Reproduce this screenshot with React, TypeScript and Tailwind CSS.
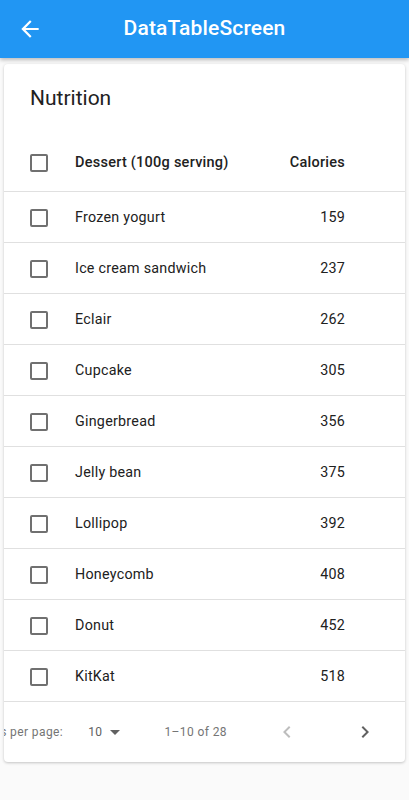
import React from "react";

const desserts = [
  { name: "Frozen yogurt", calories: 159 },
  { name: "Ice cream sandwich", calories: 237 },
  { name: "Eclair", calories: 262 },
  { name: "Cupcake", calories: 305 },
  { name: "Gingerbread", calories: 356 },
  { name: "Jelly bean", calories: 375 },
  { name: "Lollipop", calories: 392 },
  { name: "Honeycomb", calories: 408 },
  { name: "Donut", calories: 452 },
  { name: "KitKat", calories: 518 },
];

const font = { fontFamily: "Roboto, 'Noto Sans', sans-serif" };

const Checkbox = () => (
  <div className="w-[18px] h-[18px] rounded-[2px] border-2 border-[#707070] shrink-0" />
);

const Row = ({
  name,
  calories,
}: {
  name: string;
  calories: number;
}) => (
  <div className="flex items-center h-[51px] pt-[1px] border-b border-[#e0e0e0] pl-[26px] pr-[60px] text-[14.3px] tracking-[0.25px] text-[#212121]">
    <Checkbox />
    <span className="ml-[27px] flex-1">{name}</span>
    <span>{calories}</span>
  </div>
);

export default function App() {
  return (
    <div className="min-h-[800px] bg-[#fafafa]" style={font}>
      <div className="h-[58px] bg-[#2196f3] flex items-center relative shadow-[0_2px_4px_rgba(0,0,0,0.25)]">
        <button className="w-[60px] h-[58px] flex items-center justify-center">
          <svg width="26" height="26" viewBox="0 0 24 24" fill="white">
            <path d="M20 11H7.83l5.59-5.59L12 4l-8 8 8 8 1.41-1.41L7.83 13H20v-2z" />
          </svg>
        </button>
        <div className="absolute left-0 right-0 text-center text-white text-[21px] tracking-[0.15px] font-medium pointer-events-none">
          DataTableScreen
        </div>
      </div>

      <div className="mx-[4px] mt-[6px] bg-white rounded-[4px] shadow-[0_1px_3px_rgba(0,0,0,0.22)] overflow-hidden">
        <div className="h-[70px] flex items-center pl-[26px] text-[21px] text-[#212121]">
          Nutrition
        </div>
        <div className="flex items-center h-[58px] border-b border-[#e0e0e0] pl-[26px] pr-[60px] text-[14.5px] tracking-[0.25px] font-medium text-[#212121]">
          <Checkbox />
          <span className="ml-[27px] flex-1">Dessert (100g serving)</span>
          <span>Calories</span>
        </div>
        {desserts.map((d) => (
          <Row key={d.name} name={d.name} calories={d.calories} />
        ))}
        <div className="h-[60px] flex items-center justify-end overflow-hidden text-[12px] tracking-[0.4px] text-[#757575] whitespace-nowrap">
          <span className="shrink-0">Rows per page:</span>
          <div className="flex items-center shrink-0 ml-[25px]">
            <span className="text-[#616161]">10</span>
            <svg className="ml-[1px]" width="24" height="24" viewBox="0 0 24 24" fill="#616161">
              <path d="M7 10l5 5 5-5z" />
            </svg>
          </div>
          <span className="shrink-0 ml-[37px]">1–10 of 28</span>
          <div className="shrink-0 ml-[36px] w-[48px] h-[48px] flex items-center justify-center">
            <svg width="24" height="24" viewBox="0 0 24 24" fill="#bdbdbd">
              <path d="M15.41 7.41 14 6l-6 6 6 6 1.41-1.41L10.83 12z" />
            </svg>
          </div>
          <div className="shrink-0 ml-[30px] w-[48px] h-[48px] flex items-center justify-center">
            <svg width="24" height="24" viewBox="0 0 24 24" fill="#616161">
              <path d="M10 6 8.59 7.41 13.17 12l-4.58 4.59L10 18l6-6z" />
            </svg>
          </div>
          <div className="shrink-0 w-[16px]" />
        </div>
      </div>
    </div>
  );
}
